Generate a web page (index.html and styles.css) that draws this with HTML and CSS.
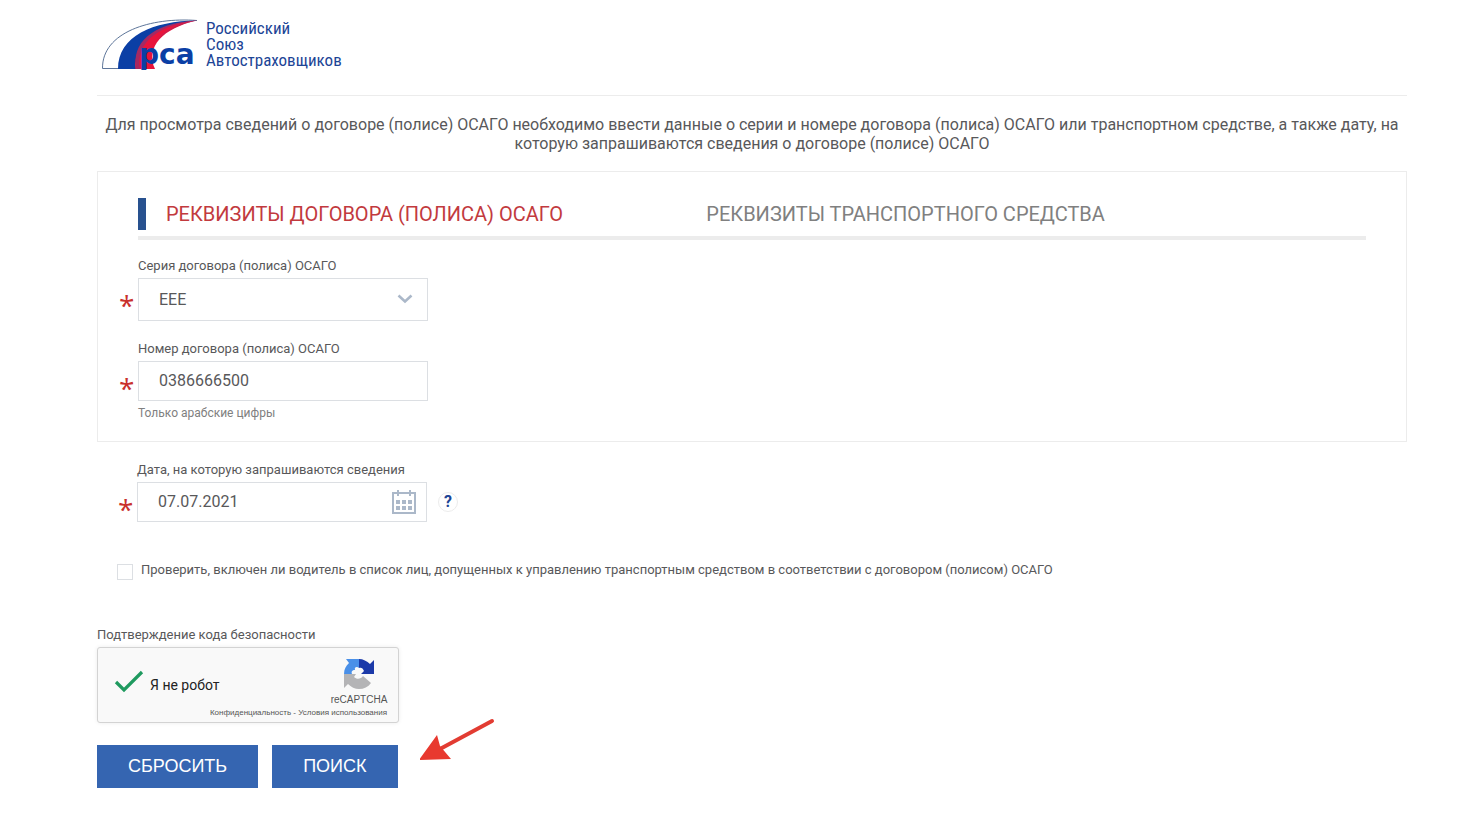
FILE: index.html
```html
<!DOCTYPE html>
<html lang="ru">
<head>
    <meta charset="UTF-8">
    <meta name="viewport" content="width=device-width, initial-scale=1.0">
    <title>Российский Союз Автостраховщиков</title>
    <link rel="stylesheet" href="styles.css">
</head>
<body>
    <div class="page">
        <header class="header">
            <a class="logo" href="#">
                <svg class="logo-mark" width="97" height="52" viewBox="0 0 97 52" aria-hidden="true">
                    <path d="M96 2.500C50 -1 1 14 1.500 50.500H21" fill="none" stroke="#5d7599" stroke-width="1"/>
                    <path d="M96 2.500C52 3 17 18 17 51H35C33 24 55 8 96 2.500Z" fill="#0b3fa5"/>
                    <path d="M96 2.500C55 6 32 24 34.500 51H54C44 29 62 10 96 2.500Z" fill="#e8143c"/>
                    <path d="M96 2.500C50 5 30 26 35.500 51H39C35 29 50 8 96 2.500Z" fill="#a32a63"/>
                    <path d="M96 2.500C78 5 62 13 55 24C63 13 78 6 96 2.500Z" fill="#a32a63"/>
                    <text class="logo-abbr" x="38" y="46">рса</text>
                </svg>
                <span class="logo-text">Российский<br>Союз<br>Автостраховщиков</span>
            </a>
        </header>

        <p class="intro">Для просмотра сведений о договоре (полисе) ОСАГО необходимо ввести данные о серии и номере договора (полиса) ОСАГО или транспортном средстве, а также дату, на которую запрашиваются сведения о договоре (полисе) ОСАГО</p>

        <form class="search-form">
            <section class="panel">
                <nav class="tabs">
                    <a class="tab active" href="#policy">Реквизиты договора (полиса) ОСАГО</a>
                    <a class="tab" href="#vehicle">Реквизиты транспортного средства</a>
                </nav>
                <div class="field">
                    <label for="series">Серия договора (полиса) ОСАГО</label>
                    <div class="control required">
                        <select id="series" class="series">
                            <option>ЕЕЕ</option>
                        </select>
                        <svg class="chevron" width="16" height="10" viewBox="0 0 16 10" aria-hidden="true">
                            <path d="M1.500 1.500L8 7.500L14.500 1.500" fill="none" stroke="#abb8c9" stroke-width="2.600"/>
                        </svg>
                    </div>
                </div>
                <div class="field">
                    <label for="number">Номер договора (полиса) ОСАГО</label>
                    <div class="control required">
                        <input type="text" id="number" value="0386666500">
                    </div>
                    <p class="hint">Только арабские цифры</p>
                </div>
            </section>

            <div class="field date-field">
                <label for="date">Дата, на которую запрашиваются сведения</label>
                <div class="date-row">
                    <div class="control required">
                        <input type="text" id="date" value="07.07.2021">
                        <svg class="calendar" width="24" height="24" viewBox="0 0 24 24" fill="#abb8c9" aria-hidden="true">
                            <path d="M0 2H5V0H7V2H17V0H19V2H24V24H0ZM2 4V22H22V4H19V6H17V4H7V6H5V4Z" fill-rule="evenodd"/>
                            <path d="M4 10h4v4H4zM10 10h4v4h-4zM16 10h4v4h-4zM4 16h4v4H4zM10 16h4v4h-4zM16 16h4v4h-4z"/>
                        </svg>
                    </div>
                    <button type="button" class="help">?</button>
                </div>
            </div>

            <div class="check-row">
                <input type="checkbox" id="driver">
                <label for="driver">Проверить, включен ли водитель в список лиц, допущенных к управлению транспортным средством в соответствии с договором (полисом) ОСАГО</label>
            </div>

            <p class="captcha-title">Подтверждение кода безопасности</p>
            <div class="captcha">
                <svg class="tick" width="30" height="24" viewBox="0 0 30 24" aria-hidden="true">
                    <path d="M2 12L10 20L28 2" fill="none" stroke="#1f9a5f" stroke-width="3.200"/>
                </svg>
                <span class="captcha-label">Я не робот</span>
                <div class="captcha-brand">
                    <svg width="32" height="32" viewBox="0 0 32 32" aria-hidden="true">
                        <path d="M3 1H16V10C14 8 11 9 12 12C9 12 8 14 9 16H1C1 11 3 8 6 5Z" fill="#4a90e8"/>
                        <path d="M16 1C20 1 24 3 27 6L31 2V16H18L21 13C20 10 18 9 16 10Z" fill="#1c3aa9"/>
                        <path d="M1 16H13L11 19C14 22 18 21 20 18L28 25C25 29 21 31 16 31C12 31 8 29 5 26L1 30Z" fill="#b4b4b6"/>
                    </svg>
                    <span class="brand-name">reCAPTCHA</span>
                </div>
                <div class="captcha-links"><a href="#">Конфиденциальность</a> - <a href="#">Условия использования</a></div>
            </div>

            <div class="actions">
                <button type="reset" class="btn">СБРОСИТЬ</button>
                <button type="submit" class="btn">ПОИСК</button>
                <svg class="arrow" width="76" height="44" viewBox="0 0 76 44" aria-hidden="true">
                    <path d="M72 3L20 31" stroke="#e23c32" stroke-width="4" stroke-linecap="round"/>
                    <path d="M-1 42L17 17L20 28L31 41Z" fill="#e8392f"/>
                </svg>
            </div>
        </form>
    </div>
</body>
</html>
```
FILE: styles.css
```css
* {
    box-sizing: border-box;
}
body {
    margin: 0;
    background-color: #fff;
    color: #58585a;
    font-family: Roboto, "Liberation Sans", sans-serif;
    font-size: 13px;
    line-height: 16px;
}
p {
    margin: 0;
}
a {
    color: inherit;
    text-decoration: none;
}
.page {
    padding: 18px 71px 40px 97px;
}
.header {
    padding: 0 0 25px 4px;
    border-bottom: 1px solid #ececec;
}
.logo {
    display: flex;
    gap: 8px;
    color: #1d4596;
}
.logo-abbr {
    font-family: "DejaVu Sans", sans-serif;
    font-size: 28px;
    font-weight: bold;
    fill: #0b3fa5;
}
.logo-text {
    padding-top: 2px;
    font-family: "Liberation Sans Narrow", "Roboto Condensed", Roboto, sans-serif;
    font-size: 17px;
    line-height: 16px;
}
.intro {
    padding: 19px 0 18px;
    font-size: 16px;
    line-height: 19px;
    text-align: center;
}
.panel {
    padding: 26px 40px 20px;
    border: 1px solid #ececec;
}
.tabs {
    display: grid;
    grid-template-columns: 11fr 14fr;
    padding-bottom: 6px;
    border-bottom: 4px solid #ececec;
    margin-bottom: 18px;
    font-size: 20px;
    line-height: 32px;
    text-transform: uppercase;
}
.tab {
    padding-left: 28px;
    color: #808080;
}
.tab.active {
    padding-left: 20px;
    border-left: 8px solid #28518f;
    color: #c23a3e;
}
.field {
    margin-bottom: 20px;
}
.field label {
    display: block;
    padding-bottom: 4px;
}
.panel .field:last-child {
    margin-bottom: 0;
}
.control {
    position: relative;
    width: 290px;
}
.required::before {
    content: "*";
    position: absolute;
    left: -19px;
    top: 13px;
    color: #c9302c;
    font-family: "Open Sans", sans-serif;
    font-size: 28px;
    line-height: 28px;
}
.control input,
.control select {
    display: block;
    width: 100%;
    height: 40px;
    padding: 0 20px;
    border: 1px solid #dcdfe3;
    border-radius: 0;
    background: #fff;
    color: #58585a;
    font-family: inherit;
    font-size: 16px;
    appearance: none;
}
.control input {
    padding-bottom: 2px;
}
.control .series {
    height: 43px;
}
.chevron {
    position: absolute;
    right: 15px;
    top: 16px;
}
.calendar {
    position: absolute;
    right: 11px;
    top: 8px;
}
.hint {
    padding-top: 4px;
    color: #808080;
    font-size: 12px;
}
.date-field {
    margin: 20px 0 0 40px;
}
.date-row {
    display: flex;
    align-items: center;
    gap: 11px;
}
.help {
    width: 20px;
    height: 20px;
    padding: 0;
    border: 1px solid #ececec;
    border-radius: 50%;
    background: #fff;
    color: #1d4596;
    font-family: inherit;
    font-size: 16px;
    font-weight: bold;
    line-height: 18px;
}
.check-row {
    display: flex;
    align-items: flex-start;
    gap: 8px;
    padding: 40px 0 47px 20px;
}
.check-row input {
    width: 16px;
    height: 16px;
    margin: 2px 0 0;
    border: 1px solid #dcdfe3;
    appearance: none;
}
.captcha-title {
    padding-bottom: 4px;
}
.captcha {
    display: grid;
    grid-template-columns: 30px 1fr 56px;
    align-content: start;
    column-gap: 6px;
    width: 302px;
    height: 76px;
    padding: 10px 11px 0 16px;
    border: 1px solid #d3d3d3;
    border-radius: 3px;
    background: #f9f9f9;
    box-shadow: 0 0 4px rgba(0, 0, 0, 0.08);
}
.tick {
    margin-top: 12px;
}
.captcha-label {
    padding-top: 19px;
    color: #222;
    font-size: 14px;
}
.captcha-brand {
    display: flex;
    flex-direction: column;
    align-items: center;
}
.brand-name {
    color: #555;
    font-family: "Liberation Sans", sans-serif;
    font-size: 10px;
    line-height: 19px;
}
.captcha-links {
    grid-column: 1 / -1;
    color: #555;
    font-family: "Liberation Sans", sans-serif;
    font-size: 8px;
    line-height: 8px;
    text-align: right;
}
.actions {
    display: flex;
    gap: 14px;
    margin-top: 22px;
}
.btn {
    height: 43px;
    padding: 0 31px;
    border: none;
    background-color: #3565b1;
    color: white;
    font-family: "Liberation Sans", sans-serif;
    font-size: 18px;
    cursor: pointer;
}
.arrow {
    margin: -27px 0 0 8px;
}
```
